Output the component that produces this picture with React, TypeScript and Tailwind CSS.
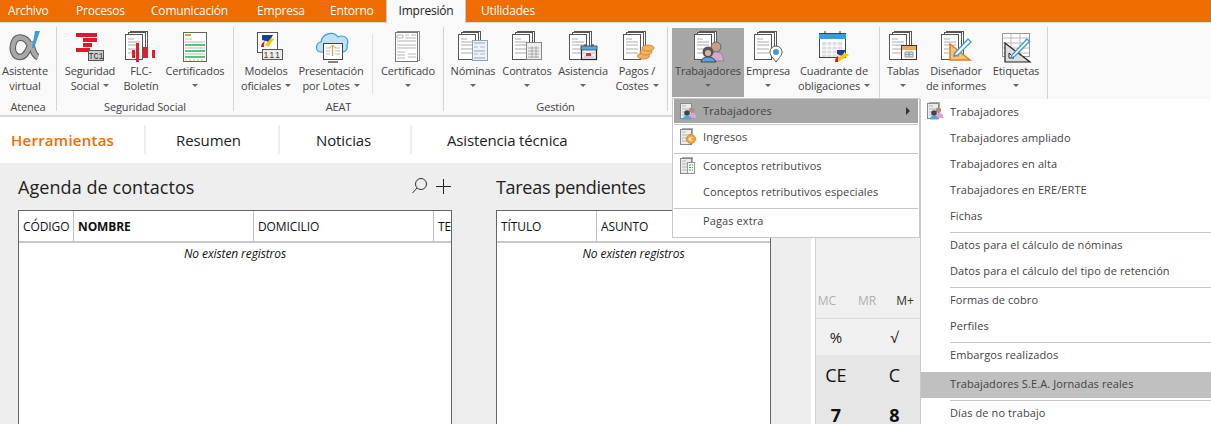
import React from "react";

const Stack = ({ x = 0, y = 0, h = 29 }: { x?: number; y?: number; h?: number }) => (
  <g transform={`translate(${x} ${y})`}>
    <rect x="5.500" y="0.500" width="17" height={h - 5} fill="#fff" stroke="#555" />
    <rect x="3.500" y="1.500" width="17" height={h - 4} fill="#fff" stroke="#555" />
    <rect x="0.500" y="3.500" width="17" height={h - 4} fill="#fff" stroke="#555" />
    <path d="M3 8h6M3 11h12M3 14h12M3 18h12M3 22h12" stroke="#aaa" strokeWidth="1" />
  </g>
);

const Svg = ({ children }: { children: React.ReactNode }) => (
  <svg width="44" height="36" viewBox="0 0 44 36" className="block">{children}</svg>
);

const IAlpha = () => (
  <Svg>
    <path d="M26 15C23 8 14 6 11 13c-3 8 0 15 6 15 6 0 9-8 11-15 1 5 2 13 7 15" fill="none" stroke="#5a5a5a" strokeWidth="6.500" />
    <path d="M26 15C23 8 14 6 11 13c-3 8 0 15 6 15 6 0 9-8 11-15 1 5 2 13 7 15" fill="none" stroke="#a8a8a8" strokeWidth="4.500" />
    <path d="M32 2h5l-6 17h-2z" fill="#3f9bd8" />
  </Svg>
);
const ITC = () => (
  <Svg>
    <path d="M8 4h21v4H8zM15 9h14v4H15zM15 14h9v4h-9zM8 19h14v4H8z" fill="#e2172b" />
    <rect x="20.500" y="21.500" width="15" height="10" fill="#ccc" stroke="#555" />
    <text x="28" y="30" textAnchor="middle" fontSize="8.500" fontFamily="Liberation Mono" fill="#333">TC1</text>
  </Svg>
);
const IFlc = () => (
  <Svg>
    <Stack x={6} y={2} />
    <path d="M13 21h3v8h-3zM17 14h3v19h-3zM24 18h5v11h-5zM33 21h3v8h-3z" fill="#dd1f2e" />
  </Svg>
);
const ICert = () => (
  <Svg>
    <rect x="10.500" y="3.500" width="23" height="29" fill="#fff" stroke="#666" />
    <path d="M12 5h6v2h-6z" fill="#b5b52c" />
    <path d="M12 10h7M12 13h20M12 19h20M12 25h20" stroke="#bbb" />
    <path d="M12 16h20M12 22h20M12 28h20" stroke="#22b14c" strokeWidth="1.300" />
    <path d="M12 31h20" stroke="#c9c92c" strokeDasharray="2 2" />
  </Svg>
);
const IAeat = () => (
  <Svg>
    <rect x="13.500" y="3.500" width="20" height="20" fill="#fff" stroke="#555" />
    <path d="M18 6h11l-4 7-7-2z" fill="#1c3f94" />
    <path d="M27 9l3 1-6 8-3-2z" fill="#f6c700" />
    <path d="M17 18c0-3 2-5 4-6-1 2-1 4-1 6z" fill="#e2172b" />
    <rect x="18.500" y="20.500" width="20" height="10" fill="#eee" stroke="#555" />
    <text x="28.500" y="29" textAnchor="middle" fontSize="9" letterSpacing="1.500" fontFamily="Liberation Sans" fill="#444">111</text>
  </Svg>
);
const ICloud = () => (
  <Svg>
    <path d="M12 23c-6 0-6-9 0-10 1-8 12-12 17-5 6-3 12 2 9 8 1 4-1 7-5 7z" fill="#bfe0f5" stroke="#3f9bd8" strokeWidth="1.200" />
    <rect x="14.500" y="14.500" width="19" height="16" fill="#fff" stroke="#444" />
    <path d="M17 19h4M17 22h4M17 25h4M26 19h5M26 22h5M26 25h5" stroke="#bbb" />
    <path d="M23.500 27V16M20.500 19l3-3 3 3" fill="none" stroke="#e59b2c" />
    <path d="M19 33h10" stroke="#444" strokeWidth="1.300" />
  </Svg>
);
const ICertif = () => (
  <Svg>
    <rect x="11.500" y="2.500" width="22" height="29" fill="#fff" stroke="#888" />
    <rect x="9.500" y="3.500" width="22" height="29" fill="#fff" stroke="#777" />
    <path d="M11 6h6v3h-6zM19 6h4M25 6h5M19 9h11M11 12h19M11 16h19M11 19h19M11 23h8M11 26h8M11 29h8M22 25h8M22 28h8" stroke="#b5b5b5" fill="none" />
  </Svg>
);
const INomina = () => (
  <Svg>
    <Stack x={7} y={2} />
    <rect x="21.500" y="11.500" width="15" height="20" fill="#eef1f6" stroke="#8fa0b8" />
    <path d="M23 14h11M23 22h11M23 29h11" stroke="#8ea6c6" strokeWidth="1.200" />
    <path d="M23 18h4M29 18h5M23 25h4M29 25h5" stroke="#b7b7b7" />
  </Svg>
);
const IContrato = () => (
  <Svg>
    <Stack x={7} y={2} />
    <rect x="21.500" y="13.500" width="15" height="17" fill="#eee" stroke="#888" />
    <path d="M23 19h11M23 22h11M23 25h11M23 28h11M27 17v12M31 17v12" stroke="#aaa" />
  </Svg>
);
const IAsist = () => (
  <Svg>
    <Stack x={8} y={2} />
    <rect x="20.500" y="17.500" width="15" height="13" fill="#eee" stroke="#222" strokeWidth="1.200" />
    <rect x="20" y="17" width="16" height="4" fill="#5ba7de" stroke="#222" strokeWidth="0.600" />
    <path d="M24 15v2M32 15v2" stroke="#222" />
    <rect x="25" y="24" width="5" height="3" fill="#d4303f" />
    <path d="M23 28h10M22 24h2M31 24h3" stroke="#bbb" />
  </Svg>
);
const IPagos = () => (
  <Svg>
    <Stack x={8} y={2} />
    <g fill="#f3b35c" stroke="#c9792a" strokeWidth="0.800">
      <ellipse cx="28.500" cy="27" rx="6" ry="3" />
      <ellipse cx="31" cy="23" rx="6" ry="3" />
      <ellipse cx="33" cy="19" rx="6" ry="3" />
    </g>
  </Svg>
);
const ITrab = () => (
  <Svg>
    <Stack x={8} y={2} />
    <circle cx="30" cy="18" r="5" fill="#c69c8a" stroke="#666" />
    <path d="M23 32c0-7 3-9 7-9 5 0 7 3 8 9z" fill="#d9a7d0" stroke="#888" />
    <circle cx="22" cy="23" r="5.500" fill="#555" />
    <circle cx="22" cy="24" r="3" fill="#d9b3a0" />
    <path d="M15 33c0-3 3-5 7-5s7 2 8 5z" fill="#56a5dc" stroke="#444" />
  </Svg>
);
const IEmpresa = () => (
  <Svg>
    <Stack x={8} y={2} />
    <path d="M30 33c-4-5-6-7-6-10a6 6 0 0 1 12 0c0 3-2 5-6 10z" fill="#fff" stroke="#555" />
    <circle cx="30" cy="23" r="3" fill="#4a97d8" />
  </Svg>
);
const ICuad = () => (
  <Svg>
    <rect x="7.500" y="4.500" width="26" height="24" fill="#fff" stroke="#444" />
    <rect x="7" y="5" width="27" height="5" fill="#3f9bd8" />
    <path d="M13 2v3M28 2v3" stroke="#333" />
    <path d="M10 13h20v15H10z" fill="#ddd" />
    <path d="M10 17h20M10 21h20M10 25h20M15 13v15M20 13v15M25 13v15" stroke="#fff" />
    <path d="M25 21h9l-4 6-5-2z" fill="#1c3f94" />
    <path d="M33 24l4 2-11 7-2-3z" fill="#f6c700" />
    <path d="M23 33c0-3 1-5 3-6 0 2 0 4 0 6z" fill="#e2172b" />
  </Svg>
);
const ITablas = () => (
  <Svg>
    <Stack x={8} y={2} />
    <rect x="20.500" y="16.500" width="15" height="14" fill="#fff" stroke="#333" />
    <rect x="21" y="17" width="14" height="4" fill="#f0a860" />
    <path d="M24 23h8v5h-8zM28 23v5M24 25.500h8" stroke="#999" fill="#ddd" />
  </Svg>
);
const IDisen = () => (
  <Svg>
    <Stack x={7} y={2} />
    <path d="M16 15v16h20z" fill="#f4c27a" stroke="#e07f22" strokeWidth="1.500" />
    <path d="M20 23v4h5z" fill="#fff" stroke="#e07f22" />
    <path d="M21 24L34 10l3 3-13 13-4 1z" fill="#fff" stroke="#3f9bd8" strokeWidth="1.300" />
  </Svg>
);
const IEtiq = () => (
  <Svg>
    <rect x="8.500" y="4.500" width="27" height="23" fill="#fff" stroke="#999" />
    <path d="M9 9h26M9 14h26M9 19h26M9 24h26M17 5v22M26 5v22" stroke="#bbb" />
    <path d="M11 14v19h25z" fill="#ddd" stroke="#222" strokeWidth="1.200" />
    <path d="M15 24v5h5z" fill="#fff" stroke="#222" />
    <path d="M18 26L33 10l2.500 2.500-15 15-3.500 1z" fill="#fff" stroke="#3f9bd8" strokeWidth="1.300" />
  </Svg>
);

const MiniDoc = ({ kind }: { kind: "trab" | "ing" | "con" }) => (
  <svg width="18" height="18" viewBox="0 0 18 18" className="block">
    <rect x="2.500" y="0.500" width="10" height="14" fill="#ececec" stroke="#aaa" />
    <rect x="0.500" y="1.500" width="11" height="15" fill="#ececec" stroke="#888" />
    <path d="M2 4h4M2 7h8M2 10h8M2 13h8" stroke="#b5b5b5" />
    {kind === "trab" && (
      <>
        <circle cx="11.500" cy="8" r="2.600" fill="#b08e80" />
        <path d="M9 16c0-4 1-5 3-5 3 0 4 1 4.500 5z" fill="#d9a7d0" />
        <circle cx="7" cy="11" r="2.800" fill="#444" />
        <path d="M3 17.500c0-3 2-4 4-4s4 1 4.500 4z" fill="#56a5dc" />
      </>
    )}
    {kind === "ing" && (
      <>
        <circle cx="11" cy="11" r="4.500" fill="#f0a33c" stroke="#e18b1f" />
        <path d="M12.500 9.500c-2-1-3 0-3 1.500s1 2.500 3 1.500M8.500 10.500h3M8.500 11.700h3" fill="none" stroke="#fff" strokeWidth="0.700" />
      </>
    )}
    {kind === "con" && (
      <>
        <rect x="7.500" y="5.500" width="7" height="11" fill="#fff" stroke="#999" />
        <path d="M9 8h4M9 10.500h4M9 13h4" stroke="#22b14c" strokeDasharray="2 1" />
      </>
    )}
  </svg>
);

const Caret = () => (
  <span className="inline-block w-0 h-0 border-l-[3.5px] border-r-[3.5px] border-t-[3.5px] border-l-transparent border-r-transparent border-t-[#666] align-middle" />
);

const Btn = ({
  w,
  icon,
  a,
  b,
  caret,
  active,
}: {
  w: string;
  icon: React.ReactNode;
  a: string;
  b?: string;
  caret?: boolean;
  active?: boolean;
}) => (
  <div className={`${w} h-[69px] flex flex-col items-center shrink-0 ${active ? "bg-[#a6a6a6]" : ""}`}>
    <div className="h-[36px] mt-[1px] flex items-center justify-center">{icon}</div>
    <div className="h-[15px] mt-[-2px] leading-[15px] whitespace-nowrap">{a}</div>
    <div className="h-[15px] leading-[15px] whitespace-nowrap flex items-center gap-[4px]">
      {b && <span>{b}</span>}
      {caret && <Caret />}
    </div>
  </div>
);

const Group = ({ label, className, children }: { label?: string; className: string; children: React.ReactNode }) => (
  <div className={`flex flex-col shrink-0 ${className}`}>
    <div className="flex h-[70px] mt-[5px]">{children}</div>
    <div className="h-[14px] mt-[2px] leading-[14px] text-center">{label}</div>
  </div>
);

const GSep = () => <div className="w-px h-[84px] mt-[4px] bg-[#d4d4d4] shrink-0" />;

const Row = ({ children, icon, hi, arrow, h = "h-[26px]" }: { children: React.ReactNode; icon?: React.ReactNode; hi?: boolean; arrow?: boolean; h?: string }) => (
  <div className={`relative ${h} flex items-center pl-[29px] ${hi ? "bg-[#a6a6a6]" : "pb-[2px]"}`}>
    {icon && <div className="absolute left-[6px] top-[3px]">{icon}</div>}
    <span className="whitespace-nowrap">{children}</span>
    {arrow && <span className="absolute right-[8px] top-[8px] w-0 h-0 border-t-[4px] border-b-[4px] border-l-[4px] border-t-transparent border-b-transparent border-l-[#333]" />}
  </div>
);

const Sep = ({ className }: { className: string }) => <div className={`flex items-end ${className}`}><div className="w-full h-px bg-[#c8c8c8]" /></div>;

const SubRow = ({ t, icon, hi, up }: { t: string; icon?: React.ReactNode; hi?: boolean; up?: boolean }) => (
  <div className={`relative h-[26px] flex items-center pl-[29px] ${up ? "pb-[2px]" : ""} ${hi ? "bg-[#c0c0c0]" : ""}`}>
    {icon && <div className="absolute left-[6px] top-[3px]">{icon}</div>}
    <span className="whitespace-nowrap">{t}</span>
  </div>
);

const Th = ({ w, t, bold, last }: { w: string; t: string; bold?: boolean; last?: boolean }) => (
  <div className={`${w} h-full flex items-center pl-[4px] pt-[1px] overflow-hidden shrink-0 whitespace-nowrap ${last ? "" : "border-r border-[#c0c0c0]"} ${bold ? "font-bold" : ""}`}>{t}</div>
);

const Table = ({ w, cols }: { w: string; cols: React.ReactNode }) => (
  <div className={`${w} h-[214px] mt-[5px] bg-white border border-b-0 border-[#666] text-[12px] text-[#111] tracking-[-0.1px]`}>
    <div className="flex h-[32px] border-b-2 border-[#c8c8c8]">{cols}</div>
    <div className="h-[21px] flex items-center justify-center italic">No existen registros</div>
  </div>
);

const tabs = [
  ["Archivo", "w-[76px] pl-[8px]"],
  ["Procesos", "w-[75px]"],
  ["Comunicación", "w-[106px]"],
  ["Empresa", "w-[73px]"],
  ["Entorno", "w-[56px]"],
];

export default function App() {
  return (
    <div className="relative w-[1211px] h-[424px] overflow-hidden bg-white" style={{ fontFamily: '"Open Sans", "Noto Sans", sans-serif' }}>
      <div className="flex h-[23px] bg-[#ee6c00] border-b border-[#d8d8d8] text-white text-[12px] leading-[22px]">
        {tabs.map(([t, w]) => (
          <div key={t} className={`${w} tracking-[-0.2px] shrink-0`}>{t}</div>
        ))}
        <div className="w-[80px] h-[23px] bg-[#f9f9f9] text-[#222] text-center border-x border-[#c8c8c8] tracking-[-0.2px] shrink-0">Impresión</div>
        <div className="pl-[15px] tracking-[-0.2px]">Utilidades</div>
      </div>

      <div className="flex h-[94px] bg-[#f9f9f9] border-b-[2px] border-[#d8d8d8] text-[11px] text-[#444] tracking-[-0.15px]">
        <Group label="Atenea" className="w-[56px]">
          <Btn w="w-[50px]" icon={<IAlpha />} a="Asistente" b="virtual" />
        </Group>
        <GSep />
        <Group label="Seguridad Social" className="w-[176px]">
          <div className="w-[6px]" />
          <Btn w="w-[54px]" icon={<ITC />} a="Seguridad" b="Social" caret />
          <Btn w="w-[48px]" icon={<IFlc />} a="FLC-" b="Boletín" />
          <Btn w="w-[60px]" icon={<ICert />} a="Certificados" caret />
        </Group>
        <GSep />
        <Group label="AEAT" className="w-[209px]">
          <div className="w-[4px]" />
          <Btn w="w-[56px]" icon={<IAeat />} a="Modelos" b="oficiales" caret />
          <Btn w="w-[74px]" icon={<ICloud />} a="Presentación" b="por Lotes" caret />
          <div className="w-[4px]" />
          <div className="w-px h-[60px] bg-[#dedede] shrink-0 mt-[6px]" />
          <Btn w="w-[70px]" icon={<ICertif />} a="Certificado" caret />
        </Group>
        <GSep />
        <Group label="Gestión" className="w-[223px]">
          <div className="w-[2px]" />
          <Btn w="w-[54px]" icon={<INomina />} a="Nóminas" caret />
          <Btn w="w-[54px]" icon={<IContrato />} a="Contratos" caret />
          <Btn w="w-[58px]" icon={<IAsist />} a="Asistencia" caret />
          <Btn w="w-[50px]" icon={<IPagos />} a="Pagos /" b="Costes" caret />
        </Group>
        <GSep />
        <Group className="w-[211px]">
          <div className="w-[4px]" />
          <Btn w="w-[72px]" active icon={<ITrab />} a="Trabajadores" caret />
          <Btn w="w-[48px]" icon={<IEmpresa />} a="Empresa" caret />
          <Btn w="w-[84px]" icon={<ICuad />} a="Cuadrante de" b="obligaciones" caret />
        </Group>
        <GSep />
        <Group className="w-[167px]">
          <div className="w-[3px]" />
          <Btn w="w-[40px]" icon={<ITablas />} a="Tablas" caret />
          <Btn w="w-[66px]" icon={<IDisen />} a="Diseñador" b="de informes" />
          <Btn w="w-[54px]" icon={<IEtiq />} a="Etiquetas" caret />
        </Group>
        <GSep />
      </div>

      <div className="flex h-[46px] bg-white text-[15px] text-[#222] pt-[8px]">
        <div className="w-[146px] h-[29px] pl-[11px] leading-[30px] font-semibold text-[#ee6c00] border-r-2 border-[#eeeeee] tracking-[0.25px]">Herramientas</div>
        <div className="w-[134px] h-[29px] pl-[30px] leading-[30px] border-r-2 border-[#eeeeee] tracking-[-0.1px]">Resumen</div>
        <div className="w-[132px] h-[29px] pl-[36px] leading-[30px] border-r-2 border-[#eeeeee] tracking-[-0.1px]">Noticias</div>
        <div className="pl-[35px] h-[29px] leading-[30px] tracking-[-0.15px]">Asistencia técnica</div>
      </div>

      <div className="flex h-[261px] bg-[#eeeeee] overflow-hidden">
        <div className="w-[434px] ml-[18px] shrink-0">
          <div className="flex items-center justify-between h-[36px] mt-[6px] text-[18px] text-[#222] tracking-[0.07px]">
            <span>Agenda de contactos</span>
            <svg width="40" height="18" viewBox="0 0 40 18" className="block">
              <circle cx="9" cy="6" r="5.500" fill="none" stroke="#333" />
              <path d="M5 10L0.500 15" stroke="#333" />
              <path d="M31.500 1v15M24 8.500h15" stroke="#222" />
            </svg>
          </div>
          <Table
            w="w-[434px]"
            cols={
              <>
                <Th w="w-[55px]" t="CÓDIGO" />
                <Th w="w-[180px]" t="NOMBRE" bold />
                <Th w="w-[180px]" t="DOMICILIO" />
                <Th w="w-[17px]" t="TELÉFONO" last />
              </>
            }
          />
        </div>
        <div className="w-[275px] ml-[44px] shrink-0">
          <div className="flex items-center h-[36px] mt-[6px] text-[18px] text-[#222] tracking-[-0.3px]">Tareas pendientes</div>
          <Table
            w="w-[275px]"
            cols={
              <>
                <Th w="w-[100px]" t="TÍTULO" />
                <Th w="w-[170px]" t="ASUNTO" last />
              </>
            }
          />
        </div>
        <div className="ml-[40px] flex-1 bg-white pl-[4px]">
          <div className="w-[118px] flex flex-col border-l border-[#d0d0d0]">
            <div className="h-[75px] bg-white shrink-0" />
            <div className="h-[81px] shrink-0 bg-[#f0f0f0] flex items-end pb-[8px] text-[12px] text-[#b0b0b0] border-b border-[#dcdcdc] whitespace-nowrap">
              <span className="w-[22px] text-center">MC</span>
              <span className="w-[58px] text-center">MR</span>
              <span className="w-[18px] text-center text-[#333]">M+</span>
            </div>
            <div className="h-[36px] shrink-0 bg-[#f0f0f0] flex items-center text-[#222] text-[15px]">
              <span className="w-[40px] text-center">%</span>
              <span className="w-[78px] text-center">√</span>
            </div>
            <div className="h-[40px] shrink-0 bg-[#e6e6e6] flex items-center text-[#111] text-[18px]">
              <span className="w-[40px] text-center">CE</span>
              <span className="w-[78px] text-center">C</span>
            </div>
            <div className="h-[40px] shrink-0 bg-[#e6e6e6] flex items-center text-[#111] text-[18px] font-bold">
              <span className="w-[40px] text-center">7</span>
              <span className="w-[78px] text-center">8</span>
            </div>
          </div>
        </div>
      </div>

      <div className="absolute left-[672px] top-[98px] w-[248px] h-[140px] bg-white border border-[#c8c8c8] text-[11px] text-[#444] px-px tracking-[0.1px]">
        <Row hi arrow h="h-[24px]" icon={<MiniDoc kind="trab" />}>Trabajadores</Row>
        <Sep className="h-[2px]" />
        <Row icon={<MiniDoc kind="ing" />}>Ingresos</Row>
        <Sep className="h-[3px]" />
        <Row icon={<MiniDoc kind="con" />}>Conceptos retributivos</Row>
        <Row>Conceptos retributivos especiales</Row>
        <Sep className="h-[3px]" />
        <Row>Pagas extra</Row>
      </div>

      <div className="absolute left-[920px] top-[99px] w-[291px] h-[325px] bg-white border-l border-[#c8c8c8] text-[11px] text-[#444] tracking-[0.1px] overflow-hidden">
        <SubRow t="Trabajadores" icon={<MiniDoc kind="trab" />} />
        <SubRow t="Trabajadores ampliado" />
        <SubRow t="Trabajadores en alta" />
        <SubRow t="Trabajadores en ERE/ERTE" />
        <SubRow t="Fichas" />
        <Sep className="h-[4px] pl-[29px]" />
        <SubRow up t="Datos para el cálculo de nóminas" />
        <SubRow up t="Datos para el cálculo del tipo de retención" />
        <Sep className="h-[3px] pl-[29px]" />
        <SubRow up t="Formas de cobro" />
        <SubRow up t="Perfiles" />
        <Sep className="h-[3px] pl-[29px]" />
        <SubRow up t="Embargos realizados" />
        <div className="h-[3px]" />
        <SubRow up t="Trabajadores S.E.A. Jornadas reales" hi />
        <Sep className="h-[3px] pl-[29px]" />
        <SubRow up t="Días de no trabajo" />
      </div>
    </div>
  );
}
